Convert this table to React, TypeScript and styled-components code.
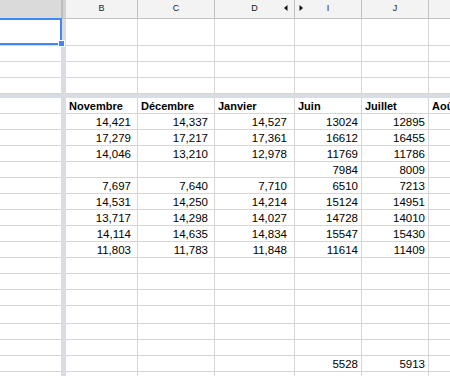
import React from "react";
import styled, { createGlobalStyle } from "styled-components";

const Global = createGlobalStyle`
  html, body { margin: 0; padding: 0; background: #fff; }
  body { font-family: "Liberation Sans", Arial, sans-serif; }
`;

const GRID = "#d6d6d6";
const HEAD_LINE = "#c2c2c2";
const FREEZE = "#dadce4";
const BLUE = "#4285f4";

type Col = { key: string; w: number; pr: number };

const COLS: Col[] = [
  { key: "B", w: 72, pr: 6 },
  { key: "C", w: 77, pr: 6 },
  { key: "D", w: 80, pr: 7 },
  { key: "I", w: 67, pr: 3 },
  { key: "J", w: 67, pr: 3 },
  { key: "K", w: 100, pr: 3 },
];

const HEADERS = ["Novembre", "Décembre", "Janvier", "Juin", "Juillet", "Août"];

const DATA: string[][] = [
  ["14,421", "14,337", "14,527", "13024", "12895", ""],
  ["17,279", "17,217", "17,361", "16612", "16455", ""],
  ["14,046", "13,210", "12,978", "11769", "11786", ""],
  ["", "", "", "7984", "8009", ""],
  ["7,697", "7,640", "7,710", "6510", "7213", ""],
  ["14,531", "14,250", "14,214", "15124", "14951", ""],
  ["13,717", "14,298", "14,027", "14728", "14010", ""],
  ["14,114", "14,635", "14,834", "15547", "15430", ""],
  ["11,803", "11,783", "11,848", "11614", "11409", ""],
  ["", "", "", "", "", ""],
  ["", "", "", "", "", ""],
  ["", "", "", "", "", ""],
  ["", "", "", "", "", ""],
  ["", "", "", "", "", ""],
  ["", "", "", "", "", ""],
  ["", "", "", "5528", "5913", ""],
  ["", "", "", "", "", ""],
];

const ROW_H = [16, 16, 16, 16, 16, 16, 16, 16, 16, 16, 16, 16, 18, 16, 16, 16, 16];

const Sheet = styled.div`
  width: 450px;
  height: 376px;
  overflow: hidden;
  display: flex;
  flex-direction: column;
  background: #fff;
`;

const Row = styled.div<{ $h: number }>`
  display: flex;
  flex: none;
  height: ${(p) => p.$h}px;
`;

const ColHead = styled.div<{ $w: number; $selected?: boolean }>`
  flex: none;
  box-sizing: border-box;
  width: ${(p) => p.$w}px;
  height: 100%;
  position: relative;
  background: ${(p) => (p.$selected ? "#dadada" : "#f3f3f3")};
  border-right: ${(p) => (p.$selected ? "none" : `1px solid ${HEAD_LINE}`)};
  border-bottom: 1px solid ${HEAD_LINE};
  display: flex;
  align-items: center;
  justify-content: center;
  padding-bottom: 2px;
  font-size: 9px;
  color: #222;
`;

const FreezeV = styled.div<{ $head?: boolean }>`
  flex: none;
  box-sizing: border-box;
  width: 5px;
  height: 100%;
  background: ${(p) => (p.$head ? "#d2d2d2" : FREEZE)};
  border-left: ${(p) => (p.$head ? "2px solid #bcbcbc" : "none")};
  border-bottom: ${(p) => (p.$head ? `1px solid ${HEAD_LINE}` : "none")};
`;

const FreezeH = styled.div`
  flex: none;
  height: 4px;
  background: ${FREEZE};
`;

const Cell = styled.div<{ $w: number; $pr?: number; $head?: boolean; $edge?: boolean }>`
  flex: none;
  box-sizing: border-box;
  width: ${(p) => p.$w}px;
  height: 100%;
  position: relative;
  border-right: ${(p) => (p.$edge ? "none" : `1px solid ${GRID}`)};
  border-bottom: 1px solid ${GRID};
  display: flex;
  align-items: flex-end;
  justify-content: ${(p) => (p.$head ? "flex-start" : "flex-end")};
  padding: 0 ${(p) => p.$pr ?? 3}px 1px 3px;
  font-size: ${(p) => (p.$head ? 11 : 11.5)}px;
  font-weight: ${(p) => (p.$head ? 700 : 400)};
  color: #000;
  white-space: nowrap;
  overflow: hidden;
`;

const ActiveCell = styled.div`
  flex: none;
  box-sizing: border-box;
  width: 61px;
  height: 100%;
  position: relative;
  border-bottom: 1px solid ${GRID};
`;

const Selection = styled.div`
  position: absolute;
  z-index: 2;
  top: -1px;
  left: -3px;
  right: -1px;
  bottom: 0;
  border: 2px solid ${BLUE};
  pointer-events: none;
`;

const Handle = styled.div`
  position: absolute;
  right: -5px;
  bottom: -4px;
  width: 5px;
  height: 5px;
  background: ${BLUE};
  border: 1px solid #fff;
`;

const Arrow = styled.svg<{ $side: "left" | "right" }>`
  position: absolute;
  top: 5px;
  ${(p) => (p.$side === "left" ? "right: 6px;" : "left: 4px;")}
`;

const LeftArrow = () => (
  <Arrow $side="left" width="4" height="6" viewBox="0 0 4 6">
    <path d="M3.5 0 L0 3 L3.5 6 Z" fill="#111" />
  </Arrow>
);

const RightArrow = () => (
  <Arrow $side="right" width="4" height="6" viewBox="0 0 4 6">
    <path d="M0.5 0 L4 3 L0.5 6 Z" fill="#111" />
  </Arrow>
);

const LETTERS: Record<string, string> = { B: "B", C: "C", D: "D", I: "I", J: "J", K: "" };

const EmptyRow = ({ h, active }: { h: number; active?: boolean }) => (
  <Row $h={h}>
    {active ? (
      <ActiveCell>
        <Selection>
          <Handle />
        </Selection>
      </ActiveCell>
    ) : (
      <Cell $w={61} $edge />
    )}
    <FreezeV />
    {COLS.map((c) => (
      <Cell key={c.key} $w={c.w} $pr={c.pr} />
    ))}
  </Row>
);

export default function App() {
  return (
    <>
      <Global />
      <Sheet>
        <Row $h={19}>
          <ColHead $w={61} $selected />
          <FreezeV $head />
          {COLS.map((c) => (
            <ColHead key={c.key} $w={c.w}>
              {LETTERS[c.key]}
              {c.key === "D" && <LeftArrow />}
              {c.key === "I" && <RightArrow />}
            </ColHead>
          ))}
        </Row>
        <EmptyRow h={27} active />
        <EmptyRow h={16} />
        <EmptyRow h={16} />
        <EmptyRow h={16} />
        <FreezeH />
        <Row $h={16}>
          <Cell $w={61} $edge />
          <FreezeV />
          {COLS.map((c, i) => (
            <Cell key={c.key} $w={c.w} $pr={c.pr} $head>
              {HEADERS[i]}
            </Cell>
          ))}
        </Row>
        {DATA.map((row, r) => (
          <Row key={r} $h={ROW_H[r]}>
            <Cell $w={61} $edge />
            <FreezeV />
            {COLS.map((c, i) => (
              <Cell key={c.key} $w={c.w} $pr={c.pr}>
                {row[i]}
              </Cell>
            ))}
          </Row>
        ))}
      </Sheet>
    </>
  );
}
